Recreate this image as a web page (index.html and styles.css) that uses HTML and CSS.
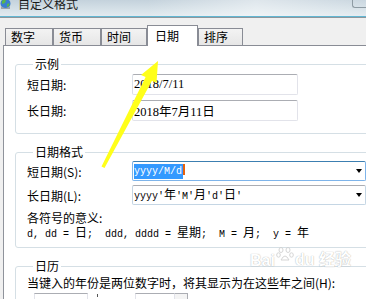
FILE: index.html
```html
<!DOCTYPE html>
<html lang="zh-CN">

<head>
  <meta charset="UTF-8">
  <title>自定义格式</title>
  <link rel="stylesheet" href="styles.css">
</head>

<body>
  <div class="titlebar">
    <svg class="app-icon" viewBox="0 0 11 11">
      <circle cx="5.5" cy="5.5" r="5" fill="#3b7fd0" />
      <path d="M2 3 Q4 1 6 2 L5 5 L2 6 Z" fill="#59b84a" />
      <path d="M7 6 L9.5 5 L9 8 L7 9 Z" fill="#59b84a" />
      <path d="M1 8 Q5.5 12 10 8 L10 11 L1 11 Z" fill="#9aa3aa" />
    </svg>
    <span class="title">自定义格式</span>
    <span class="winbtn"></span>
  </div>

  <div class="dialog">
    <div class="tabs">
      <span class="tab w48">数字</span>
      <span class="tab w48">货币</span>
      <span class="tab w46">时间</span>
      <span class="tab on">日期</span>
      <span class="tab w45">排序</span>
    </div>

    <div class="panel">
      <fieldset class="group g1">
        <legend>示例</legend>
        <div class="row">
          <span class="lbl">短日期:</span>
          <span class="field">2018/7/11</span>
        </div>
        <div class="row">
          <span class="lbl">长日期:</span>
          <span class="field">2018年7月11日</span>
        </div>
      </fieldset>

      <fieldset class="group g2">
        <legend>日期格式</legend>
        <div class="row crow">
          <span class="lbl">短日期(S):</span>
          <span class="combo focus">
            <span class="mono sel">yyyy/M/d</span><span class="mark"></span>
            <span class="caret"></span>
          </span>
        </div>
        <div class="row crow">
          <span class="lbl">长日期(L):</span>
          <span class="combo">
            <span class="mono">yyyy'<span class="cj">年</span>'M'<span class="cj">月</span>'d'<span class="cj">日</span>'</span>
            <span class="caret"></span>
          </span>
        </div>
        <div class="note">各符号的意义:</div>
        <div class="mono legend-line">d, dd = <span class="cj">日</span>;  ddd, dddd = <span class="cj">星期</span>;  M = <span class="cj">月</span>;  y = <span class="cj">年</span></div>
      </fieldset>

      <fieldset class="group g3">
        <legend>日历</legend>
        <div class="note">当键入的年份是两位数字时，将其显示为在这些年之间(H):</div>
        <div class="yr-row">
          <span class="yr-box"></span>
          <span class="tick"></span>
          <span class="yr-box short"></span>
          <span class="spin"></span>
        </div>
      </fieldset>
    </div>
  </div>

  <!-- annotation arrow drawn over the dialog -->
  <svg class="arrow" width="366" height="299" viewBox="0 0 366 299">
    <polygon points="158,61 156.5,83 152,80.8 104.5,168 101.5,166.5 145.6,77 141,75" fill="#ffff1a" />
  </svg>

  <div class="watermark">
    <span>Bai</span>
    <svg class="paw" width="18" height="16" viewBox="0 0 18 16">
      <g fill="none" stroke="#cfcfcf">
        <ellipse cx="5" cy="4" rx="2" ry="2.5" />
        <ellipse cx="12" cy="4" rx="2" ry="2.5" />
        <ellipse cx="2.5" cy="9" rx="1.8" ry="2.2" />
        <ellipse cx="15.5" cy="9" rx="1.8" ry="2.2" />
        <path d="M5 14 Q9 6 13 14 Z" />
      </g>
    </svg>
    <span>du 经验</span>
  </div>
</body>

</html>
```

FILE: styles.css
```css
body {
  margin: 0;
  width: 366px;
  height: 299px;
  overflow: hidden;
  position: relative;
  background: #f0f0f0;
  font-family: "Noto Sans CJK SC", sans-serif;
  font-size: 12px;
  color: #000;
}

.titlebar {
  height: 16px;
  display: flex;
  align-items: flex-start;
  gap: 7px;
  overflow: hidden;
  background: linear-gradient(90deg, rgba(255, 255, 255, 0) 40%, rgba(255, 255, 255, 0.45) 70%, rgba(255, 255, 255, 0.1) 100%),
    linear-gradient(180deg, #c4d2dc 0%, #d6e1e8 60%, #e2eaef 100%);
  border-bottom: 1px solid #62b7d3;
}

.app-icon {
  width: 11px;
  height: 11px;
  margin-top: -2px;
  flex: none;
}

.title {
  line-height: 12px;
  margin-top: -2px;
  font-size: 12px;
  color: #1a1a1a;
}

.winbtn {
  margin-left: auto;
  width: 13px;
  height: 7px;
  border-left: 1px solid #8e9ba3;
  border-bottom: 1px solid #8e9ba3;
  border-bottom-left-radius: 3px;
}

.dialog {
  border-top: 1px solid #8d969c;
  padding-left: 3px;
}

.tabs {
  display: flex;
  align-items: flex-end;
  height: 27px;
  padding-left: 2px;
}

.tab {
  box-sizing: border-box;
  height: 17px;
  border: 1px solid #898c95;
  border-bottom: none;
  background: linear-gradient(#f3f3f3, #e6e6e6);
  padding-left: 5px;
  line-height: 16px;
}

.w48 {
  width: 48px;
}

.w46 {
  width: 46px;
}

.w45 {
  width: 45px;
}

.tab.on {
  width: 51px;
  height: 21px;
  margin-bottom: -1px;
  background: #fff;
  padding-left: 7px;
  line-height: 19px;
  position: relative;
  z-index: 1;
}

.panel {
  height: 260px;
  overflow: hidden;
  background: #fff;
  border-left: 1px solid #8f939b;
  border-top: 1px solid #898c95;
}

.group {
  width: 400px;
  margin: 11px 0 0 11px;
  padding: 3px 0 12px 11px;
  border: 1px solid #d5dfe5;
  border-radius: 3px;
  min-width: 0;
}

.group legend {
  margin-left: 6px;
  padding: 0 2px;
  line-height: 14px;
}

.g2 {
  padding-top: 2px;
  padding-bottom: 7px;
}

.g3 {
  margin-top: 11px;
}

.row {
  display: flex;
  align-items: center;
  height: 21px;
}

.row + .row {
  margin-top: 5px;
}

.lbl {
  width: 105px;
  flex: none;
}

.field {
  box-sizing: border-box;
  width: 166px;
  height: 21px;
  display: flex;
  align-items: center;
  padding-left: 1px;
  border: 1px solid #e2e3ea;
  border-top-color: #abadb3;
  border-left-color: #dbdfe6;
  border-radius: 2px;
  font-family: "Liberation Serif", "Noto Sans CJK SC", serif;
  font-size: 12.5px;
}

.crow {
  height: 20px;
}

.crow + .crow {
  margin-top: 4px;
}

.combo {
  box-sizing: border-box;
  width: 234px;
  height: 20px;
  display: flex;
  align-items: center;
  padding-left: 1px;
  border: 1px solid #c5d6e4;
  border-top-color: #abadb3;
  border-radius: 2px;
}

.combo.focus {
  border-color: #7eb4ea;
  border-top-color: #3c7fb1;
}

.mono {
  font-family: "Liberation Mono", monospace;
  font-size: 10px;
  white-space: pre;
}

.cj {
  font-family: "Noto Sans CJK SC", sans-serif;
  font-size: 12px;
  line-height: 1;
}

.sel {
  background: #3399ff;
  color: #fff;
  line-height: 15px;
  padding-right: 1px;
}

.mark {
  width: 2px;
  height: 11px;
  margin-top: -4px;
  background: #e8620c;
}

.caret {
  margin-left: auto;
  margin-right: 3px;
  border-left: 3.5px solid transparent;
  border-right: 3.5px solid transparent;
  border-top: 4px solid #000;
}

.note {
  line-height: 14px;
  margin-top: 6px;
}

.g3 .note {
  margin-top: 0;
}

.legend-line {
  height: 14px;
  line-height: 14px;
  margin-top: 1px;
}

.yr-row {
  display: flex;
  margin-top: 3px;
  height: 20px;
}

.yr-box {
  box-sizing: border-box;
  width: 54px;
  height: 20px;
  margin-left: 7px;
  border: 1px solid #e2e3ea;
  border-top-color: #abadb3;
}

.tick {
  width: 1px;
  height: 3px;
  margin: 1px 37px 0 9px;
  background: #555;
}

.yr-box.short {
  width: 40px;
  margin-left: 0;
}

.spin {
  box-sizing: border-box;
  width: 13px;
  height: 20px;
  border: 1px solid #abadb3;
  border-left: none;
  background: #f4f4f4;
}

.arrow {
  position: absolute;
  top: 0;
  left: 0;
  pointer-events: none;
}

.watermark {
  position: absolute;
  left: 250px;
  top: 246px;
  display: flex;
  align-items: flex-end;
  gap: 1px;
  font-family: "Liberation Sans", "Noto Sans CJK SC", sans-serif;
  font-size: 16px;
  font-weight: bold;
  color: #fff;
  text-shadow: 0 0 1px rgba(0, 0, 0, 0.45);
  opacity: 0.85;
  pointer-events: none;
}

.paw {
  margin-bottom: 8px;
}
```
